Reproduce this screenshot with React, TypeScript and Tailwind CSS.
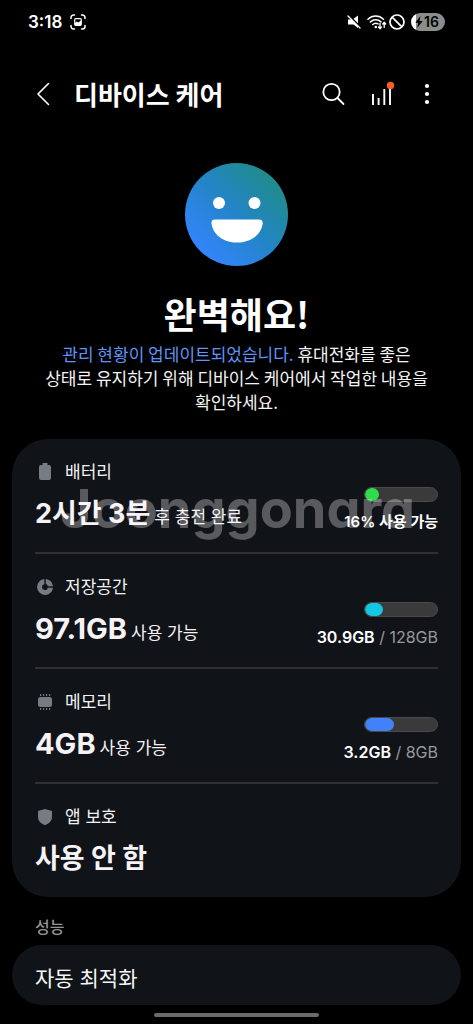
import type { ReactNode } from "react"

interface CareItem {
  id: string
  label: string
  value: string
  valueSize: string
  suffix?: string
  icon: ReactNode
  usage?: {
    percent: number
    color: string
    strong: string
    textSize: string
    rest?: string
  }
}

const items: CareItem[] = [
  {
    id: "battery",
    label: "배터리",
    value: "2시간 3분",
    valueSize: "text-[27px]",
    suffix: "후 충전 완료",
    icon: <path d="M7.5 1h5v2H14a2 2 0 0 1 2 2v11a2 2 0 0 1-2 2H6a2 2 0 0 1-2-2V5a2 2 0 0 1 2-2h1.5z" />,
    usage: { percent: 20, color: "bg-[#2fdc4c]", strong: "16% 사용 가능", textSize: "text-[15px]" },
  },
  {
    id: "storage",
    label: "저장공간",
    value: "97.1GB",
    valueSize: "text-[29px]",
    suffix: "사용 가능",
    icon: (
      <>
        <path d="M9.3 2v5.2a3 3 0 1 0 3.6 3.6h5.1A8 8 0 1 1 9.3 2z" />
        <path d="M10.8 2a8 8 0 0 1 7.2 7.2h-5.1a3 3 0 0 0-2.1-2.1z" />
      </>
    ),
    usage: { percent: 25, color: "bg-[#12c6e4]", strong: "30.9GB", textSize: "text-base", rest: " / 128GB" },
  },
  {
    id: "memory",
    label: "메모리",
    value: "4GB",
    valueSize: "text-[29px]",
    suffix: "사용 가능",
    icon: (
      <>
        <rect x="3" y="5" width="14" height="10" rx="2.5" />
        <path d="M5 2h1.2v2H5zM8 2h1.2v2H8zM11 2h1.2v2H11zM14 2h1.2v2H14zM5 16h1.2v2H5zM8 16h1.2v2H8zM11 16h1.2v2H11zM14 16h1.2v2H14z" />
      </>
    ),
    usage: { percent: 40, color: "bg-[#4182fb]", strong: "3.2GB", textSize: "text-base", rest: " / 8GB" },
  },
  {
    id: "protection",
    label: "앱 보호",
    value: "사용 안 함",
    valueSize: "text-[27px]",
    icon: <path d="M10 2l6.3 1.8q.7.2.7 1V10c0 4-3 6.7-7 8.2C6 16.7 3 14 3 10V4.8q0-.8.7-1z" />,
  },
]

function StatusBar() {
  return (
    <div className="flex h-11 items-center justify-between px-7 text-white">
      <div className="flex items-center gap-2">
        <span className="text-[17px] font-semibold leading-6">3:18</span>
        <svg className="size-4" viewBox="0 0 16 16" fill="none" stroke="currentColor" strokeWidth="1.5" strokeLinecap="round">
          <path d="M1 4.5v-1A2.5 2.5 0 0 1 3.5 1h1M11.5 1h1A2.5 2.5 0 0 1 15 3.5v1M15 11.500v1a2.5 2.5 0 0 1-2.5 2.5h-1M4.5 15h-1A2.5 2.5 0 0 1 1 12.5v-1" />
          <rect x="4.7" y="4.7" width="6.6" height="6.6" rx="1" strokeWidth="1.2" />
          <path d="M5 11V9l1.8-1.6 1.5 1.2L11 6.5V11z" fill="currentColor" stroke="none" />
        </svg>
      </div>
      <div className="flex items-center gap-0.5">
        <svg className="mr-0.5 size-4" viewBox="0 0 16 16" fill="currentColor">
          <path d="M1 5.5h3.6l6.4 6.400V14L6.500 10.500H1zM6.500 4.800L11 1.500v7.700z" />
          <path d="M1 2l12 12" stroke="currentColor" strokeWidth="1.4" strokeLinecap="round" />
        </svg>
        <svg className="h-4 w-5" viewBox="0 0 20 16" fill="none" stroke="currentColor" strokeWidth="1.6" strokeLinecap="round">
          <path d="M1 5.200a11 11 0 0 1 15.400 0M3.500 7.900a7.500 7.500 0 0 1 10.400 0M5.800 10.500a4.400 4.400 0 0 1 5.200-.6" />
          <circle cx="8.800" cy="13" r="1.300" fill="currentColor" stroke="none" />
          <path d="M13 9.500v5M11.500 13l1.500 1.700 1.500-1.700M17.200 13.500v-5M15.700 10l1.500-1.700L18.700 10" strokeWidth="1.3" />
        </svg>
        <svg className="size-4" viewBox="0 0 16 16" fill="none" stroke="currentColor" strokeWidth="1.7">
          <circle cx="8" cy="8" r="7" />
          <path d="M3.100 3.100l9.800 9.800" />
        </svg>
        <div className="ml-1 flex h-[18px] w-[34px] items-center overflow-hidden rounded-full bg-linear-to-r from-white from-15% to-[#8b8d8b] to-15% pl-1 text-black">
          <svg className="h-3 w-2" viewBox="0 0 8 12" fill="currentColor">
            <path d="M5.500 0L.3 6.700h2.900L2.200 12l5.500-6.900H4.600z" />
          </svg>
          <span className="pl-px text-sm font-semibold leading-4">16</span>
        </div>
      </div>
    </div>
  )
}

function Header() {
  return (
    <header className="flex h-25 items-center pl-8 pr-10 text-white">
      <button type="button" aria-label="뒤로" className="flex size-6 items-center justify-center">
        <svg className="size-6" viewBox="0 0 24 24" fill="none" stroke="currentColor" strokeWidth="1.6" strokeLinecap="round" strokeLinejoin="round">
          <path d="M16.5 1.5L6 12l10.500 10.500" />
        </svg>
      </button>
      <h1 className="flex-1 pl-[18px] font-['Noto_Sans_CJK_KR',sans-serif] text-[26px] font-bold leading-8">디바이스 케어</h1>
      <div className="flex items-center gap-6">
        <button type="button" aria-label="검색" className="size-6">
          <svg className="size-6" viewBox="0 0 24 24" fill="none" stroke="currentColor" strokeWidth="1.8" strokeLinecap="round">
            <circle cx="10.500" cy="10" r="8.200" />
            <path d="M16.500 16l6 6" />
          </svg>
        </button>
        <button type="button" aria-label="사용 현황" className="size-7">
          <svg className="size-7" viewBox="0 0 28 28" fill="none" stroke="currentColor" strokeWidth="1.9">
            <path d="M4 14v11M9.600 18v7M15.300 9v16M21 7v18" />
            <circle cx="21.500" cy="5.500" r="3.700" fill="#f4621f" stroke="none" />
          </svg>
        </button>
        <button type="button" aria-label="더보기" className="h-6 w-3">
          <svg className="h-6 w-3" viewBox="0 0 12 24" fill="currentColor">
            <circle cx="6" cy="4" r="2.100" />
            <circle cx="6" cy="12" r="2.100" />
            <circle cx="6" cy="20" r="2.100" />
          </svg>
        </button>
      </div>
    </header>
  )
}

function Face() {
  return (
    <svg className="size-26" viewBox="0 0 104 104">
      <defs>
        <linearGradient id="face" x1="0.15" y1="0.85" x2="0.85" y2="0.15">
          <stop offset="0" stopColor="#3384fb" />
          <stop offset="0.5" stopColor="#2385c8" />
          <stop offset="1" stopColor="#208b8c" />
        </linearGradient>
      </defs>
      <circle cx="51.500" cy="51.500" r="51.500" fill="url(#face)" />
      <circle cx="34" cy="40" r="6" fill="#fff" />
      <circle cx="69.500" cy="40" r="6" fill="#fff" />
      <path d="M30 56.500h44q4 0 3.700 4C76 72 65.500 79.500 52 79.500S28 72 26.500 60.500q-.4-4 3.500-4z" fill="#fff" />
    </svg>
  )
}

function CareRow({ item }: { item: CareItem }) {
  const { usage } = item
  return (
    <li className="flex h-[115px] items-start justify-between border-b-2 border-[#303033] pt-5 last:h-[113px] last:border-b-0">
      <div className="pt-px">
        <div className="flex items-center gap-2.5 text-[17px] leading-6 text-[#f2f2f4]">
          <svg className="size-5 text-[#777b82]" viewBox="0 0 20 20" fill="currentColor">
            {item.icon}
          </svg>
          <h2>{item.label}</h2>
        </div>
        <p className="flex items-baseline gap-1 pt-3 text-[#f6f2f6]">
          <strong className={`font-bold leading-9 ${item.valueSize}`}>{item.value}</strong>
          {item.suffix && <span className="text-[17px] leading-6">{item.suffix}</span>}
        </p>
      </div>
      {usage && (
        <div className="flex flex-col items-end gap-2 pt-7">
          <div
            role="progressbar"
            aria-label={item.label}
            aria-valuenow={usage.percent}
            className="h-[15px] w-[74px] overflow-hidden rounded-full border border-[#4a4a4b] bg-[#3a3a3a]"
          >
            <div className={`h-full rounded-full ${usage.color}`} style={{ width: `${usage.percent}%` }} />
          </div>
          <p className={`leading-6 text-[#98989c] ${usage.textSize}`}>
            <span className="font-semibold text-white">{usage.strong}</span>
            {usage.rest}
          </p>
        </div>
      )}
    </li>
  )
}

export default function App() {
  return (
    <div className="min-h-screen bg-black font-['Inter','Noto_Sans_CJK_KR',sans-serif]">
      <StatusBar />
      <Header />

      <main className="px-3">
        <section className="flex flex-col items-center pt-[19px] text-center text-white">
          <Face />
          <p className="pt-[22px] font-['Noto_Sans_CJK_KR',sans-serif] text-4xl font-bold leading-12">완벽해요!</p>
          <p className="px-7 pt-[5px] font-['Noto_Sans_CJK_KR',sans-serif] text-[17px] leading-6 break-keep text-[#f4f4f4]">
            <a href="#history" className="text-[#5f93f7]">
              관리 현황이 업데이트되었습니다.
            </a>{" "}
            휴대전화를 좋은 상태로 유지하기 위해 디바이스 케어에서 작업한 내용을 확인하세요.
          </p>
        </section>

        <section className="relative mt-[25px] rounded-[36px] bg-[#101318] px-[23px]">
          <ul>
            {items.map((item) => (
              <CareRow key={item.id} item={item} />
            ))}
          </ul>
          <span className="pointer-events-none absolute left-12 top-[34px] text-[54px] font-bold leading-18 text-white/30 [font-feature-settings:'cv11']">
            Joonggonara
          </span>
        </section>

        <h2 className="px-[23px] pb-1.5 pt-[18px] text-base font-medium leading-6 text-[#949496]">성능</h2>
        <button
          type="button"
          className="flex h-15 w-full items-center rounded-full bg-[#101318] px-[23px] pt-2 text-left text-[21px] leading-8 text-[#f6f6f6]"
        >
          자동 최적화
        </button>
      </main>

      <div className="flex justify-center pt-2">
        <div className="h-1 w-[165px] rounded-full bg-[#6a6a6a]" />
      </div>
    </div>
  )
}
